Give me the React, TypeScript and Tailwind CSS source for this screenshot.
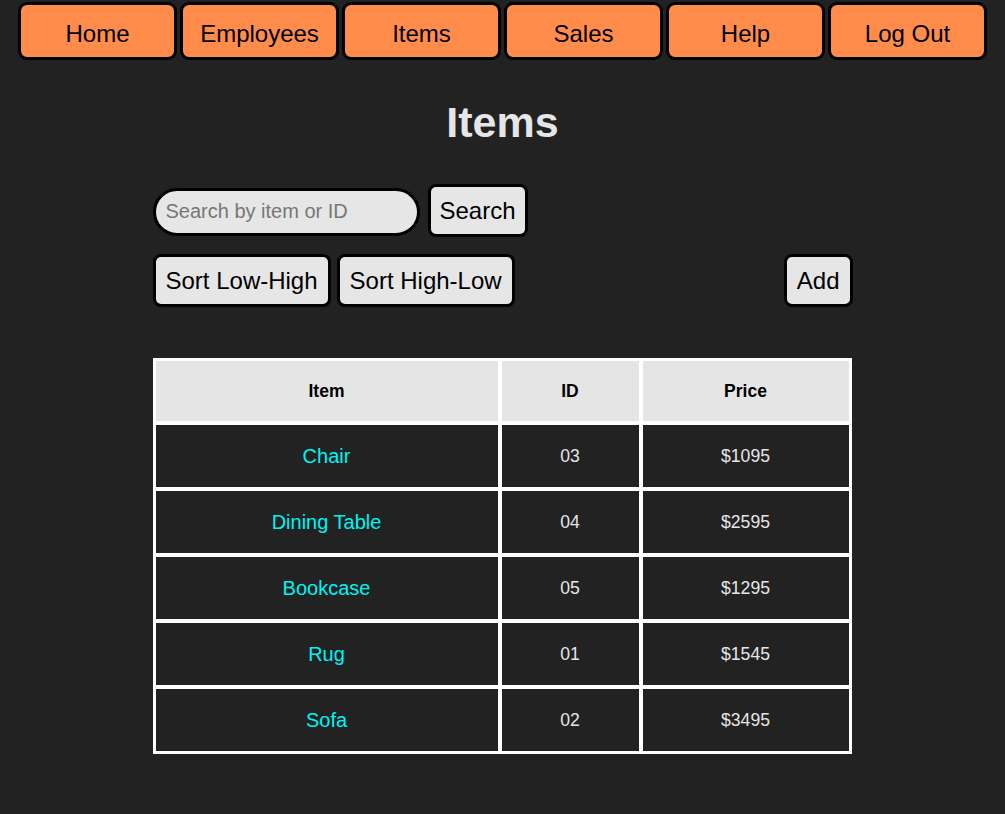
import React from "react";

const navItems = ["Home", "Employees", "Items", "Sales", "Help", "Log Out"];

const rows = [
  { name: "Chair", id: "03", price: "$1095" },
  { name: "Dining Table", id: "04", price: "$2595" },
  { name: "Bookcase", id: "05", price: "$1295" },
  { name: "Rug", id: "01", price: "$1545" },
  { name: "Sofa", id: "02", price: "$3495" },
];

export default function App() {
  return (
    <div
      className="min-h-[814px] w-full bg-[#222222] text-[#e6e6e6]"
      style={{ fontFamily: '"Liberation Sans", Arial, sans-serif' }}
    >
      <nav className="flex justify-center gap-[3px] pt-[2px]">
        {navItems.map((n) => (
          <button
            key={n}
            className="flex h-[58px] w-[159px] items-center justify-center rounded-[9px] border-[3px] border-black bg-[#ff8c4b] pt-[5px] text-[24px] text-black"
          >
            {n}
          </button>
        ))}
      </nav>

      <h1 className="mt-[37px] text-center text-[43px] font-bold leading-[50px] text-[#e6e6e6]">
        Items
      </h1>

      <div className="mx-auto mt-[37px] w-[700px]">
        <div className="flex items-center gap-[8px]">
          <input
            type="text"
            placeholder="Search by item or ID"
            className="mt-[2px] h-[48px] w-[267px] rounded-full border-[3px] border-black bg-[#e6e6e6] px-[10px] text-[20px] text-black outline-none placeholder:text-[#777777]"
          />
          <button className="h-[53px] rounded-[8px] border-[3px] border-black bg-[#e6e6e6] px-[9px] pt-[1px] text-[24px] text-black">
            Search
          </button>
        </div>

        <div className="mt-[17px] flex items-center">
          <div className="flex gap-[6px]">
            <button className="h-[53px] rounded-[8px] border-[3px] border-black bg-[#e6e6e6] px-[10px] pt-[1px] text-[24px] text-black">
              Sort Low-High
            </button>
            <button className="h-[53px] rounded-[8px] border-[3px] border-black bg-[#e6e6e6] px-[10px] pt-[1px] text-[24px] text-black">
              Sort High-Low
            </button>
          </div>
          <button className="ml-auto h-[53px] rounded-[8px] border-[3px] border-black bg-[#e6e6e6] px-[10px] pt-[1px] text-[24px] text-black">
            Add
          </button>
        </div>

        <div className="mt-[51px] grid w-[699px] grid-cols-[346px_141px_210px] border border-white">
          {["Item", "ID", "Price"].map((h) => (
            <div
              key={h}
              className="flex h-[64px] items-center justify-center border-2 border-white bg-[#e5e5e5] text-[17.5px] font-bold text-black"
            >
              {h}
            </div>
          ))}
          {rows.map((r) => (
            <React.Fragment key={r.id}>
              <div className="flex h-[66px] items-center justify-center border-2 border-white text-[20px] text-[#00f2f2]">
                {r.name}
              </div>
              <div className="flex h-[66px] items-center justify-center border-2 border-white text-[17.6px] text-[#e6e6e6]">
                {r.id}
              </div>
              <div className="flex h-[66px] items-center justify-center border-2 border-white text-[17.6px] text-[#e6e6e6]">
                {r.price}
              </div>
            </React.Fragment>
          ))}
        </div>
      </div>
    </div>
  );
}
